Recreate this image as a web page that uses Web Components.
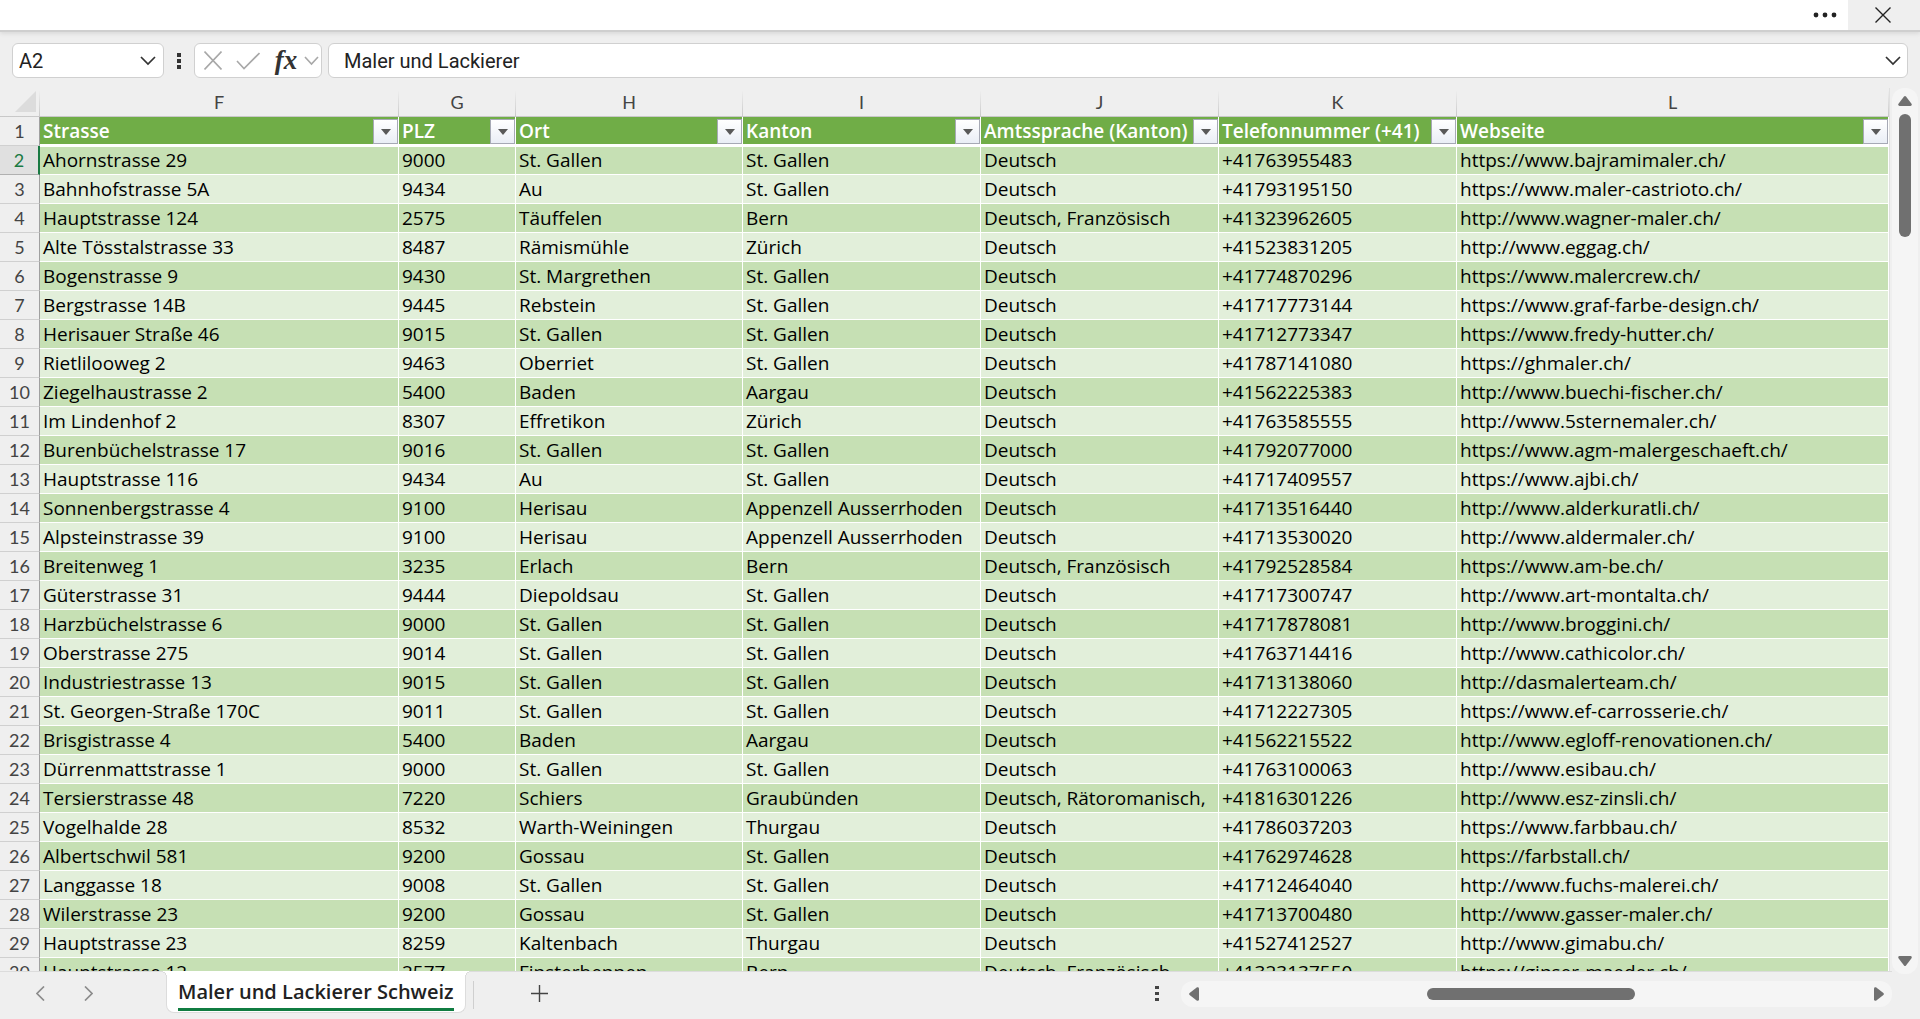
<!DOCTYPE html>
<html lang="de">
<head>
<meta charset="utf-8">
<title>Maler und Lackierer Schweiz</title>
<style>
  html, body { height: 100%; }
  body { margin: 0; overflow: hidden; background: #efefef; }
</style>
</head>
<body>
<workbook-app></workbook-app>

<script>
const doc = document;

const COLUMNS = [
  {letter: 'F', title: 'Strasse', width: 359},
  {letter: 'G', title: 'PLZ', width: 117},
  {letter: 'H', title: 'Ort', width: 227},
  {letter: 'I', title: 'Kanton', width: 238},
  {letter: 'J', title: 'Amtssprache (Kanton)', width: 238},
  {letter: 'K', title: 'Telefonnummer (+41)', width: 238},
  {letter: 'L', title: 'Webseite'},
];

const ROWS = `
Ahornstrasse 29|9000|St. Gallen|St. Gallen|Deutsch|+41763955483|https://www.bajramimaler.ch/
Bahnhofstrasse 5A|9434|Au|St. Gallen|Deutsch|+41793195150|https://www.maler-castrioto.ch/
Hauptstrasse 124|2575|Täuffelen|Bern|Deutsch, Französisch|+41323962605|http://www.wagner-maler.ch/
Alte Tösstalstrasse 33|8487|Rämismühle|Zürich|Deutsch|+41523831205|http://www.eggag.ch/
Bogenstrasse 9|9430|St. Margrethen|St. Gallen|Deutsch|+41774870296|https://www.malercrew.ch/
Bergstrasse 14B|9445|Rebstein|St. Gallen|Deutsch|+41717773144|https://www.graf-farbe-design.ch/
Herisauer Straße 46|9015|St. Gallen|St. Gallen|Deutsch|+41712773347|https://www.fredy-hutter.ch/
Rietlilooweg 2|9463|Oberriet|St. Gallen|Deutsch|+41787141080|https://ghmaler.ch/
Ziegelhaustrasse 2|5400|Baden|Aargau|Deutsch|+41562225383|http://www.buechi-fischer.ch/
Im Lindenhof 2|8307|Effretikon|Zürich|Deutsch|+41763585555|http://www.5sternemaler.ch/
Burenbüchelstrasse 17|9016|St. Gallen|St. Gallen|Deutsch|+41792077000|https://www.agm-malergeschaeft.ch/
Hauptstrasse 116|9434|Au|St. Gallen|Deutsch|+41717409557|https://www.ajbi.ch/
Sonnenbergstrasse 4|9100|Herisau|Appenzell Ausserrhoden|Deutsch|+41713516440|http://www.alderkuratli.ch/
Alpsteinstrasse 39|9100|Herisau|Appenzell Ausserrhoden|Deutsch|+41713530020|http://www.aldermaler.ch/
Breitenweg 1|3235|Erlach|Bern|Deutsch, Französisch|+41792528584|https://www.am-be.ch/
Güterstrasse 31|9444|Diepoldsau|St. Gallen|Deutsch|+41717300747|http://www.art-montalta.ch/
Harzbüchelstrasse 6|9000|St. Gallen|St. Gallen|Deutsch|+41717878081|http://www.broggini.ch/
Oberstrasse 275|9014|St. Gallen|St. Gallen|Deutsch|+41763714416|http://www.cathicolor.ch/
Industriestrasse 13|9015|St. Gallen|St. Gallen|Deutsch|+41713138060|http://dasmalerteam.ch/
St. Georgen-Straße 170C|9011|St. Gallen|St. Gallen|Deutsch|+41712227305|https://www.ef-carrosserie.ch/
Brisgistrasse 4|5400|Baden|Aargau|Deutsch|+41562215522|http://www.egloff-renovationen.ch/
Dürrenmattstrasse 1|9000|St. Gallen|St. Gallen|Deutsch|+41763100063|http://www.esibau.ch/
Tersierstrasse 48|7220|Schiers|Graubünden|Deutsch, Rätoromanisch,|+41816301226|http://www.esz-zinsli.ch/
Vogelhalde 28|8532|Warth-Weiningen|Thurgau|Deutsch|+41786037203|https://www.farbbau.ch/
Albertschwil 581|9200|Gossau|St. Gallen|Deutsch|+41762974628|https://farbstall.ch/
Langgasse 18|9008|St. Gallen|St. Gallen|Deutsch|+41712464040|http://www.fuchs-malerei.ch/
Wilerstrasse 23|9200|Gossau|St. Gallen|Deutsch|+41713700480|http://www.gasser-maler.ch/
Hauptstrasse 23|8259|Kaltenbach|Thurgau|Deutsch|+41527412527|http://www.gimabu.ch/
Hauptstrasse 12|2577|Finsterhennen|Bern|Deutsch, Französisch|+41323137550|https://ginser-maeder.ch/
`.trim().split('\n').map((line) => line.split('|'));

// shared by every shadow root
const BASE = `
  :host,*,::after,::before{box-sizing:border-box}
  button{margin:0;border:0;padding:0;background:none;color:inherit;font:inherit;display:flex;align-items:center;justify-content:center;cursor:pointer}
  svg{display:block;fill:none;stroke:currentColor}
`;

const define = (name, html, setup) => {
  const template = doc.createElement('template');
  template.innerHTML = html;
  customElements.define(name, class extends HTMLElement {
    constructor() {
      super();
      const root = this.attachShadow({mode: 'open'});
      root.appendChild(template.content.cloneNode(true));
      if (setup) setup.call(this, root);
    }
  });
};

//--> title bar
define('title-bar', `
  <style>${BASE}
    :host {
      position: relative;
      display: flex;
      justify-content: flex-end;
      height: 32px;
      border-bottom: 2px solid #cfcfcf;
      background: #fff;
      color: #222;
      box-shadow: 0 1px 5px rgba(0, 0, 0, .12);
    }
    button { width: 46px; height: 30px; }
    .close { width: 72px; padding-right: 2px; background: #efefef; }
  </style>
  <button type="button" aria-label="Mehr">
    <svg width="24" height="6" viewBox="0 0 24 6"><g fill="currentColor" stroke="none"><circle cx="3" cy="3" r="2.4"/><circle cx="12" cy="3" r="2.4"/><circle cx="21" cy="3" r="2.4"/></g></svg>
  </button>
  <button type="button" class="close" aria-label="Schliessen">
    <svg width="16" height="16" viewBox="0 0 16 16" stroke-width="1.4"><path d="M.5.5l15 15M15.5.5l-15 15"/></svg>
  </button>
`);

//--> formula bar
define('formula-bar', `
  <style>${BASE}
    :host {
      display: flex;
      gap: 6px;
      height: 56px;
      padding: 11px 12px 10px;
      color: #333;
      font: 20px/24px Roboto, "Liberation Sans", sans-serif;
    }
    .box {
      display: flex;
      align-items: center;
      height: 35px;
      border: 1px solid #d0d0d0;
      border-radius: 6px;
      background: #fff;
    }
    input {
      flex: 1;
      min-width: 0;
      height: 100%;
      margin: 0;
      border: 0;
      padding: 0;
      outline: 0;
      background: none;
      color: #222;
      font: inherit;
    }
    .name { width: 152px; padding: 0 7px 0 6px; }
    .grip { width: 18px; color: #333; }
    .tools { width: 128px; padding: 0 2px 0 9px; gap: 14px; color: #a8a8a8; }
    .fx { flex: 1; color: #333; font: italic bold 27px/27px "Liberation Serif", serif; }
    .fx + button { margin-left: -8px; }
    .formula { flex: 1; padding: 0 6px 0 15px; }
  </style>
  <div class="box name">
    <input aria-label="Namenfeld" value="A2">
    <button type="button" aria-label="Namen anzeigen">
      <svg width="16" height="10" viewBox="0 0 16 10" stroke-width="1.7"><path d="M1 1l7 7 7-7"/></svg>
    </button>
  </div>
  <button type="button" class="grip" aria-label="Grösse ändern">
    <svg width="4" height="16" viewBox="0 0 4 16"><path fill="currentColor" stroke="none" d="M0 0h4v4H0zM0 6h4v4H0zM0 12h4v4H0z"/></svg>
  </button>
  <div class="box tools">
    <button type="button" aria-label="Abbrechen">
      <svg width="18" height="19" viewBox="0 0 18 19" stroke-width="1.6"><path d="M.5.5l17 18M17.5.5L.5 18.5"/></svg>
    </button>
    <button type="button" aria-label="Eingeben">
      <svg width="24" height="18" viewBox="0 0 24 18" stroke-width="1.6"><path d="M1 9l7 7.500L23.500 1"/></svg>
    </button>
    <button type="button" class="fx" aria-label="Funktion einfügen">fx</button>
    <button type="button" aria-label="Funktionen">
      <svg width="15" height="10" viewBox="0 0 15 10" stroke-width="1.6"><path d="M1 1l6.500 7L14 1"/></svg>
    </button>
  </div>
  <div class="box formula">
    <input aria-label="Bearbeitungsleiste" value="Maler und Lackierer">
    <button type="button" aria-label="Erweitern">
      <svg width="16" height="10" viewBox="0 0 16 10" stroke-width="1.7"><path d="M1 1l7 7 7-7"/></svg>
    </button>
  </div>
`);

//--> worksheet
define('sheet-grid', `
  <style>${BASE}
    :host {
      display: block;
      overflow: hidden;
      border-right: 1px solid #e0e0e0;
      padding-top: 3px;
      color: #000;
      font: 19px/28px "Open Sans", "Liberation Sans", sans-serif;
    }
    table { width: 100%; table-layout: fixed; border-spacing: 0; }
    th, td { height: 29px; padding: 0; overflow: hidden; white-space: nowrap; text-align: left; font-weight: normal; }
    .letters th {
      height: 26px;
      border-right: 1px solid;
      border-bottom: 1px solid #a0a0a0;
      border-image: linear-gradient(#efefef, #c8c8c8) 1;
      color: #444;
      text-align: center;
      vertical-align: top;
      font: 18px/23px Lato, "Liberation Sans", sans-serif;
    }
    .letters .corner { padding: 0 3px 4px 14px; vertical-align: bottom; }
    .corner svg { margin-left: auto; }
    .number {
      border-right: 1px solid #a0a0a0;
      border-bottom: 1px solid #d0d0d0;
      color: #444;
      text-align: center;
      font: 18px/28px Lato, "Liberation Sans", sans-serif;
    }
    .active .number { border-right: 2px solid #1a7a43; border-bottom-color: #b0b0b0; background: #e0e0e0; color: #1a7a43; }
    .titles .title { border-right: 1px solid #fff; border-bottom: 2px solid #fff; background: #70ad47; color: #fff; font-weight: 600; }
    .title div { display: flex; align-items: flex-end; justify-content: space-between; height: 27px; padding-left: 3px; line-height: 26px; }
    .title button {
      flex: none;
      width: 25px;
      height: 25px;
      border: 1px solid #a6a9b5;
      background: linear-gradient(#fff, #eaeef6);
      color: #595959;
    }
    td { border-right: 1px solid #fff; border-bottom: 1px solid #fff; padding-left: 3px; background: #e2efda; }
    tbody tr:nth-child(odd) td { background: #c6e0b4; }
    .active td { border-top: 1px solid #fff; line-height: 27px; }
    a { color: inherit; text-decoration: none; }
  </style>
  <table>
    <colgroup><col style="width: 40px"></colgroup>
    <thead>
      <tr class="letters"><th class="corner"><svg width="21" height="21" viewBox="0 0 21 21"><path fill="#dcdcdc" stroke="none" d="M21 0v21H0z"/></svg></th></tr>
      <tr class="titles"><th class="number" scope="row">1</th></tr>
    </thead>
    <tbody></tbody>
  </table>
`, function (root) {
  const $ = (selector) => root.querySelector(selector);
  COLUMNS.forEach(({letter, title, width}) => {
    $('colgroup').insertAdjacentHTML('beforeend', `<col${width ? ` style="width: ${width}px"` : ''}>`);
    $('.letters').insertAdjacentHTML('beforeend', `<th scope="col">${letter}</th>`);
    $('.titles').insertAdjacentHTML('beforeend', `
      <th class="title" scope="col"><div>${title}<button type="button" aria-label="Filter ${title}">
        <svg width="10" height="6" viewBox="0 0 10 6"><path fill="currentColor" stroke="none" d="M0 0h10L5 6z"/></svg>
      </button></div></th>`);
  });
  $('tbody').innerHTML = ROWS.map((cells, i) => `
    <tr${i ? '' : ' class="active"'}><th class="number" scope="row">${i + 2}</th>${cells.map((text) =>
      `<td>${text.startsWith('http') ? `<a href="${text}">${text}</a>` : text}</td>`).join('')}</tr>`).join('');
});

//--> scroll bar, vertical unless it has the "horizontal" attribute
define('scroll-bar', `
  <style>${BASE}
    :host {
      display: flex;
      flex-direction: column;
      align-items: center;
      width: 26px;
      padding: 8px 0;
      border-radius: 12px;
      background: #f5f5f5;
      color: #707070;
    }
    :host([horizontal]) { flex-direction: row; width: auto; height: 26px; padding: 0 8px; }
    .before { flex: var(--before); }
    .after { flex: var(--after); }
    .thumb { flex: var(--size); width: 12px; border-radius: 6px; background: #707070; }
    :host([horizontal]) .thumb { width: auto; height: 12px; }
    :host([horizontal]) svg { transform: rotate(-90deg); margin: 0 -2px; }
    svg { fill: currentColor; stroke: none; }
  </style>
  <button type="button" aria-label="Zurück"><svg width="14" height="10" viewBox="0 0 14 10"><path d="M6 .6Q7-.4 8 .6L13.700 8Q14 10 12.500 10H1.500Q0 10 .3 8z"/></svg></button>
  <div class="before"></div><div class="thumb"></div><div class="after"></div>
  <button type="button" aria-label="Weiter"><svg width="14" height="10" viewBox="0 0 14 10"><path d="M6 9.400Q7 10.400 8 9.400L13.700 2Q14 0 12.500 0H1.500Q0 0 .3 2z"/></svg></button>
`);

//--> sheet tabs
define('sheet-tab', `
  <style>${BASE}
    :host { display: block; }
    button {
      position: relative;
      height: 42px;
      border: 1px solid #dcdcdc;
      border-top: 0;
      border-radius: 0 0 8px 8px;
      padding: 0 11px;
      background: #fff;
      color: #222;
      font: 600 20px/38px "Open Sans", "Liberation Sans", sans-serif;
    }
    span { height: 38px; border-bottom: 3px solid #107c41; white-space: nowrap; }
    button::before, button::after { content: ""; position: absolute; top: 0; width: 6px; height: 6px; }
    button::before { left: -6px; background: radial-gradient(circle at 0 100%, #efefef 5px, #dcdcdc 5px 6px, #fff 6px); }
    button::after { right: -6px; background: radial-gradient(circle at 100% 100%, #efefef 5px, #dcdcdc 5px 6px, #fff 6px); }
  </style>
  <button type="button"><span><slot></slot></span></button>
`);

define('sheet-bar', `
  <style>${BASE}
    :host {
      display: flex;
      height: 48px;
      padding-right: 28px;
      color: #8c8c8c;
      background: linear-gradient(#dcdcdc, #dcdcdc) 0 0 / calc(100% - 28px) 1px no-repeat;
    }
    nav { display: flex; gap: 24px; width: 166px; height: 45px; padding-left: 28px; }
    nav button { width: 24px; }
    .add { width: 132px; height: 45px; color: #444; }
    .divider { width: 1px; height: 28px; margin: 10px 0 0 7px; background: #cfcfcf; }
    .grip { width: 24px; height: 45px; margin: 0 12px 0 auto; color: #444; }
    scroll-bar { width: 711px; max-width: 38%; margin-top: 10px; --before: 228; --size: 208; --after: 239; }
  </style>
  <nav>
    <button type="button" aria-label="Vorheriges Blatt"><svg width="9" height="15" viewBox="0 0 9 15" stroke-width="1.7"><path d="M8 .5l-7 7 7 7"/></svg></button>
    <button type="button" aria-label="Nächstes Blatt"><svg width="9" height="15" viewBox="0 0 9 15" stroke-width="1.7"><path d="M1 .5l7 7-7 7"/></svg></button>
  </nav>
  <slot></slot>
  <div class="divider"></div>
  <button type="button" class="add" aria-label="Neues Blatt"><svg width="17" height="17" viewBox="0 0 17 17" stroke-width="1.4"><path d="M8.500 0v17M0 8.500h17"/></svg></button>
  <button type="button" class="grip" aria-label="Grösse ändern"><svg width="4" height="16" viewBox="0 0 4 16"><path fill="currentColor" stroke="none" d="M0 0h4v3H0zM0 6h4v3H0zM0 12h4v3H0z"/></svg></button>
  <scroll-bar horizontal></scroll-bar>
`);

define('workbook-app', `
  <style>
    :host { display: flex; flex-direction: column; height: 100vh; min-height: 320px; background: #efefef; }
    title-bar, formula-bar, sheet-bar { flex: none; }
    main { flex: 1; min-height: 0; display: flex; gap: 2px; padding-right: 2px; }
    sheet-grid { flex: 1; min-width: 0; }
    main scroll-bar { flex: none; margin-bottom: -3px; --before: 8; --size: 123; --after: 719; }
  </style>
  <title-bar></title-bar>
  <formula-bar></formula-bar>
  <main>
    <sheet-grid></sheet-grid>
    <scroll-bar></scroll-bar>
  </main>
  <sheet-bar><sheet-tab>Maler und Lackierer Schweiz</sheet-tab></sheet-bar>
`);
</script>
</body>
</html>
